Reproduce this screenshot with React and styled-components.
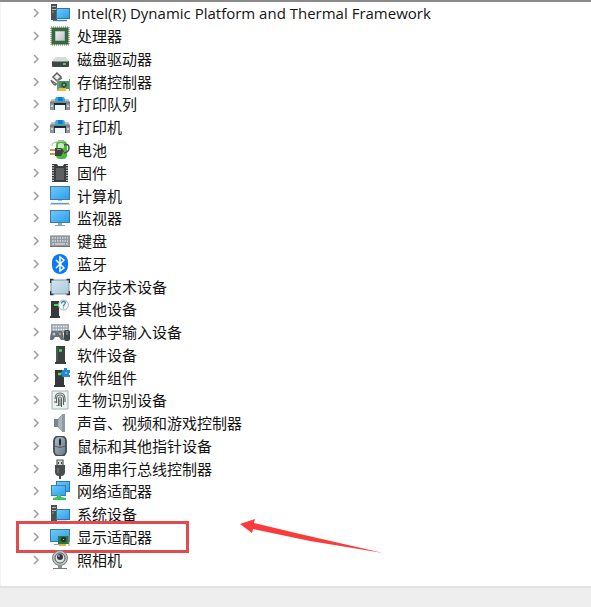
import React, { useState } from 'react';
import styled, { createGlobalStyle } from 'styled-components';

const Tower = () => (
  <>
    <path d="M1 1h6v16h-6z" fill="#4b5054" />
    <path d="M2 3.500h4M2 6.500h4" stroke="#b4b9bb" />
    <path d="M2 9h2" stroke="#55d04d" />
    <path d="M6 5h14v11h-14z" fill="#34779c" />
    <path d="M7 6h12v9h-12z" fill="url(#screen)" />
    <path d="M3 17.500h14" stroke="#357fae" strokeWidth="1.400" />
  </>
);

const Chip = () => (
  <>
    <path d="M1 1h18v18h-18z" fill="none" stroke="#b3a574" strokeWidth="1.600" strokeDasharray="1 1" />
    <path d="M1.500 1.500h17v17h-17z" fill="#356849" />
    <path d="M5 5h10v10h-10z" fill="#8b9b8f" />
    <path d="M5.500 5.500h9v9h-9z" fill="url(#metal)" />
  </>
);

const Drive = () => (
  <>
    <path d="M5 8h11l3 5h-17z" fill="#d8d9d9" />
    <path d="M2 12h17v5q0 1-1 1h-15q-1 0-1-1z" fill="#414646" />
    <path d="M2.500 12.500h16" stroke="#8b9190" />
    <path d="M13 15h3" stroke="#48d14c" strokeWidth="2" />
  </>
);

const Storage = () => (
  <>
    <path d="M3 5l4-4 4 4-4 4z" fill="#eee" stroke="#5f6463" strokeWidth="1.500" />
    <path d="M2 9l6 4M1 8q2 5 5 5M9 8l3-2" fill="none" stroke="#686d6c" strokeWidth="1.500" />
    <path d="M7 9h12v8h-12z" fill="#4a9468" />
    <path d="M6 8h2v11" fill="none" stroke="#8d9491" strokeWidth="1.500" />
    <circle cx="14" cy="13" r="2.700" fill="#24543a" />
    <path d="M13 12h2v2h-2z" fill="#7eb88a" />
    <path d="M9 16h7v3h-7z" fill="#ecbb3a" />
    <path d="M19.500 7v12" stroke="#75a27e" />
  </>
);

const Printer = () => (
  <>
    <path d="M2 5h16l2 3v8h-20v-8z" fill="#8d959a" />
    <path d="M2 5h16l1 2h-18z" fill="#b9c2c7" />
    <path d="M5 5l1-2h8l1 2v3h-10z" fill="#2bb3cf" />
    <path d="M8 3h4l1 4h-5z" fill="#1c74d0" />
    <path d="M0 8h20v2h-20z" fill="#7b848a" />
    <path d="M4 9h12v2h-12z" fill="#24292c" />
    <path d="M5 11h10v6h-10z" fill="#f2f7f9" />
    <path d="M4.500 11v5M15.500 11v5" stroke="#474e52" />
    <path d="M1 11h2v2h-2zM17 11h2v2h-2z" fill="#c3d3da" />
  </>
);

const Battery = () => (
  <>
    <rect x="6" y="1" width="11" height="18" rx="4" fill="#49b83b" />
    <path d="M8 0h6v2h-6z" fill="#a9bba5" />
    <path d="M8 4q3-2 6 0v4h-6z" fill="#c5e9b8" />
    <path d="M14 5q5-2 5 3 0 4-5 5" fill="none" stroke="#4c5250" strokeWidth="1.500" />
    <path d="M5 8h6l3 3-3 5h-6z" fill="#424340" />
    <path d="M0 10h5M0 14h5" stroke="#c09b4b" strokeWidth="2" />
    <path d="M7 9.500h4" stroke="#909390" />
    <path d="M2 6q0-4 5-4" fill="none" stroke="#a3aaa5" />
  </>
);

const Firmware = () => (
  <>
    <path d="M2 1h5l1 2h5l1-2h4v18h-16z" fill="#3b3e3f" />
    <path d="M3 2v17M17 2v17" stroke="#c8cbcb" strokeWidth="2" strokeDasharray="1 1.500" />
    <path d="M6 5h8v12h-8z" fill="#5c6060" />
  </>
);

const Pc = () => (
  <>
    <path d="M0 0h20v14h-20z" fill="#427a9c" />
    <path d="M1 1h18v12h-18z" fill="url(#screen)" />
    <path d="M8 14h4v1h-4z" fill="#a9bcc6" />
    <path d="M1 17.500h18" stroke="#6c9db9" strokeWidth="1.400" />
    <path d="M0 18.500h20" stroke="#c1cbd0" />
  </>
);

const Monitor = () => (
  <>
    <path d="M0 2h20v13h-20z" fill="#427a9c" />
    <path d="M1 3h18v11h-18z" fill="url(#screen)" />
    <path d="M8 15h4v2h-4z" fill="#91a6b0" />
    <path d="M5 17.500h10" stroke="#87a7b7" />
  </>
);

const Keyboard = () => (
  <>
    <path d="M0 4h20v12h-20z" fill="#9299a0" />
    <path d="M0 4.500h20" stroke="#b6babd" />
    <path d="M2 7h16M2 10h16" stroke="#d5dadd" strokeWidth="1.500" strokeDasharray="1.500 1" />
    <path d="M2 13h2M5 13h10M16 13h2" stroke="#eef1f2" />
    <path d="M0 15.500h20" stroke="#6a7278" />
  </>
);

const Bluetooth = () => (
  <>
    <rect x="2" y="0" width="16" height="20" rx="8" fill="#0a7cf0" />
    <path d="M6 6l8 8-4 3v-14l4 3-8 8" fill="none" stroke="#fff" strokeWidth="1.500" />
  </>
);

const Memory = () => (
  <>
    <rect x="1" y="3" width="18" height="14" rx="1" fill="url(#glass)" stroke="#8b979f" />
    <path d="M.500 6v-3.500h3M16.500 2.500h3v3.500M.500 14v3.500h3M16.500 17.500h3v-3.500" fill="none" stroke="#34393d" strokeWidth="1.500" />
  </>
);

const Unknown = () => (
  <>
    <path d="M1 2h8v15h-8zM0 17h10v2h-10z" fill="#353b3c" />
    <path d="M4 6h4" stroke="#4bd458" strokeWidth="2" />
    <circle cx="13.500" cy="6" r="5" fill="#f3f8fa" stroke="#a8b6bb" />
    <path d="M11.500 4.500q0-2 2-2 3 0 1 3l-1 1v1M13.500 8.500v1" fill="none" stroke="#3d86af" strokeWidth="1.300" />
  </>
);

const Gamepad = () => (
  <>
    <path d="M1 2h18v9h-18z" fill="#a4aaad" />
    <path d="M3 4.500h14M3 7.500h14" stroke="#eceeef" strokeWidth="1.500" strokeDasharray="1.500 1" />
    <path d="M2 9h10q2 4 2 9h-3l-2-3h-4l-2 3h-3q0-6 2-9z" fill="#65707a" />
    <circle cx="4" cy="12" r="1.500" fill="#b6c2cc" />
    <path d="M6 10h3" stroke="#348bd4" strokeWidth="2" />
    <circle cx="10" cy="12" r="1.300" fill="#d6943d" />
    <rect x="14" y="8" width="6" height="11" rx="2" fill="#3d464b" />
    <path d="M17 9v4" stroke="#adb7bd" />
  </>
);

const Device = () => (
  <>
    <path d="M6 1h9v16h-9zM5 17h11v2h-11z" fill="#3b4040" />
    <path d="M7 2v14" stroke="#656b6a" />
    <path d="M9 5.500h3" stroke="#48e24f" strokeWidth="2.500" />
  </>
);

const Component = () => (
  <>
    <path d="M5 2h9v15h-9zM4 17h11v2h-11z" fill="#343a3b" />
    <path d="M8 6h3" stroke="#48e24f" strokeWidth="2.500" />
    <path d="M12 2h2v-2h3v2h3v3h-1v2h1v2h-8v-2h-1v-3h1z" fill="#2588d2" />
    <path d="M15 4h2v2h-2z" fill="#6bb5e8" />
  </>
);

const Fingerprint = () => (
  <>
    <path d="M2 1h16v18h-16z" fill="#edf3f1" stroke="#9bb4b0" />
    <path d="M5 9q0-6 5-6t5 6v3M6.500 13v-4q0-4 3.500-4t3.500 4v6M8.500 16v-7q0-2 1.500-2t1.500 2v8M10 9v7M5 11v2M7 15v1" fill="none" stroke="#59625f" strokeWidth="1.100" />
  </>
);

const Speaker = () => (
  <>
    <path d="M4 6h4v8h-4z" fill="#76858e" />
    <path d="M8 6l5-5v18l-5-5z" fill="#a9b4bb" stroke="#8c989f" strokeWidth=".7" />
    <path d="M12 1h3v18h-3z" fill="#8e9aa1" />
  </>
);

const Mouse = () => (
  <>
    <rect x="4" y="0" width="12" height="20" rx="5" fill="url(#mouse)" stroke="#414951" strokeWidth="1.800" />
    <path d="M4 10q6 3 12 0M10 2v9" fill="none" stroke="#46515a" strokeWidth=".8" />
    <rect x="9" y="3" width="2" height="6" rx="1" fill="#1e2429" />
  </>
);

const Usb = () => (
  <>
    <path d="M7 1h6v6h-6z" fill="#d7d9d9" stroke="#535858" strokeWidth="1.200" />
    <path d="M8.500 3v2M11.500 3v2" stroke="#454949" />
    <path d="M5 6h10v7q0 3-3 4h-4q-3-1-3-4z" fill="#494d4d" />
    <path d="M8 9v5" stroke="#888d8d" />
    <path d="M10 16v4" stroke="#454949" strokeWidth="2" />
  </>
);

const Network = () => (
  <>
    <path d="M6 0h14v11h-14z" fill="#2b7ca9" />
    <path d="M7 1h12v9h-12z" fill="url(#screen)" />
    <path d="M1 4h15v11h-15z" fill="#3882ad" />
    <path d="M2 5h13v9h-13z" fill="url(#screen)" />
    <path d="M7 14h4v2l5 1v2h-13v-2l4-1z" fill="#3fc15a" />
  </>
);

const Display = () => (
  <>
    <path d="M0 2h20v13h-20z" fill="#3e789b" />
    <path d="M1 3h18v11h-18z" fill="url(#screen)" />
    <path d="M4 17.500h5" stroke="#87a7b7" />
    <path d="M8 9h11v8h-11z" fill="#327247" />
    <circle cx="13.500" cy="12.500" r="2.700" fill="#1c3b28" />
    <path d="M13 12h1v1h-1z" fill="#a2cda7" />
    <path d="M9 17h7v2h-7z" fill="#dfb238" />
    <path d="M19 8v11" stroke="#8d9b91" />
  </>
);

const Camera = () => (
  <>
    <circle cx="10" cy="8" r="7.500" fill="#bfc3c3" stroke="#797e7e" />
    <circle cx="10" cy="8" r="5" fill="#e3e5e5" stroke="#555a5b" />
    <circle cx="10" cy="7" r="3" fill="#32393e" />
    <circle cx="9" cy="6" r="1" fill="#8fabc0" />
    <path d="M8 15h4v3h-4z" fill="#8d9292" />
    <path d="M3 18.500h14" stroke="#747979" />
  </>
);

const devices = [
  { name: 'Intel(R) Dynamic Platform and Thermal Framework', Icon: Tower },
  { name: '处理器', Icon: Chip },
  { name: '磁盘驱动器', Icon: Drive },
  { name: '存储控制器', Icon: Storage },
  { name: '打印队列', Icon: Printer },
  { name: '打印机', Icon: Printer },
  { name: '电池', Icon: Battery },
  { name: '固件', Icon: Firmware },
  { name: '计算机', Icon: Pc },
  { name: '监视器', Icon: Monitor },
  { name: '键盘', Icon: Keyboard },
  { name: '蓝牙', Icon: Bluetooth },
  { name: '内存技术设备', Icon: Memory },
  { name: '其他设备', Icon: Unknown },
  { name: '人体学输入设备', Icon: Gamepad },
  { name: '软件设备', Icon: Device },
  { name: '软件组件', Icon: Component },
  { name: '生物识别设备', Icon: Fingerprint },
  { name: '声音、视频和游戏控制器', Icon: Speaker },
  { name: '鼠标和其他指针设备', Icon: Mouse },
  { name: '通用串行总线控制器', Icon: Usb },
  { name: '网络适配器', Icon: Network },
  { name: '系统设备', Icon: Tower },
  { name: '显示适配器', Icon: Display, marked: true },
  { name: '照相机', Icon: Camera },
];

function DeviceRow({ name, Icon, marked }) {
  const [open, setOpen] = useState(false);
  const handleToggle = () => {
    setOpen(!open);
  };
  return (
    <Row>
      <Toggle type="button" aria-label={name} aria-expanded={open} onClick={handleToggle}>
        <Chevron viewBox="0 0 8 10" $open={open}>
          <path d="M2 1l4 4-4 4" fill="none" stroke="#a0a0a0" strokeWidth="1.600" />
        </Chevron>
      </Toggle>
      <DeviceIcon viewBox="0 0 20 20" aria-hidden="true">
        <Icon />
      </DeviceIcon>
      <Name>{name}</Name>
      {marked && (
        <>
          <Frame />
          <Arrow viewBox="0 0 144 36" aria-hidden="true">
            <path d="M0 5L15 0l-1 4L60 15 143 34 70 22 13 10l-1 4z" fill="#fa3b3b" />
          </Arrow>
        </>
      )}
    </Row>
  );
}

function App() {
  return (
    <Page>
      <GlobalStyle />
      <Gradients aria-hidden="true">
        <defs>
          <linearGradient id="screen" x1="0" y1="0" x2="1" y2="1">
            <stop offset="0" stopColor="#6fc8fb" />
            <stop offset="1" stopColor="#2c9fee" />
          </linearGradient>
          <linearGradient id="metal" x1="0" y1="0" x2="1" y2="1">
            <stop offset="0" stopColor="#f1f2f2" />
            <stop offset="1" stopColor="#b9bfbf" />
          </linearGradient>
          <linearGradient id="glass" x1="0" y1="0" x2="1" y2="1">
            <stop offset="0" stopColor="#d2e5f0" />
            <stop offset="1" stopColor="#a9c9df" />
          </linearGradient>
          <linearGradient id="mouse" x1="0" y1="0" x2="1" y2="1">
            <stop offset="0" stopColor="#aebdc9" />
            <stop offset="1" stopColor="#667886" />
          </linearGradient>
        </defs>
      </Gradients>
      <DeviceList>
        {devices.map((device) => (
          <DeviceRow key={device.name} {...device} />
        ))}
      </DeviceList>
      <StatusBar />
    </Page>
  );
}

const GlobalStyle = createGlobalStyle`
  body {
    margin: 0;
    background: #ffffff;
  }
`;

const Page = styled.main`
  display: flex;
  flex-direction: column;
  min-height: 100vh;
  box-sizing: border-box;
  border-top: 2px solid #8a8a8a;
  font-family: 'Open Sans', 'Noto Sans CJK SC', sans-serif;
  font-size: 15px;
  line-height: 22px;
  color: #141414;
`;

const Gradients = styled.svg`
  position: absolute;
  width: 0;
  height: 0;
`;

const DeviceList = styled.ul`
  flex: 1;
  display: flex;
  flex-direction: column;
  margin: 0;
  padding: 0 0 15px 31px;
  list-style: none;
  border-left: 1px solid #f7f3f3;
`;

const Row = styled.li`
  position: relative;
  flex: 1 0 22px;
  display: flex;
  align-items: center;
`;

const Toggle = styled.button`
  display: flex;
  width: 8px;
  margin-right: 10px;
  padding: 0;
  border: none;
  background: none;
`;

const Chevron = styled.svg`
  width: 8px;
  height: 10px;
  transform: ${(props) => (props.$open ? 'rotate(90deg)' : 'none')};
`;

const DeviceIcon = styled.svg`
  flex: none;
  width: 20px;
  height: 20px;
  margin-right: 7px;
`;

const Name = styled.span`
  white-space: nowrap;
`;

const Frame = styled.div`
  position: absolute;
  top: -5px;
  bottom: -5px;
  left: -16px;
  width: 173px;
  box-sizing: border-box;
  border: 3px solid #e24a4e;
`;

const Arrow = styled.svg`
  position: absolute;
  top: -7px;
  left: 208px;
  width: 144px;
  height: 36px;
`;

const StatusBar = styled.footer`
  height: 19px;
  border-top: 2px solid #e2e2e2;
  background: #eeeeee;
`;

export default App;
